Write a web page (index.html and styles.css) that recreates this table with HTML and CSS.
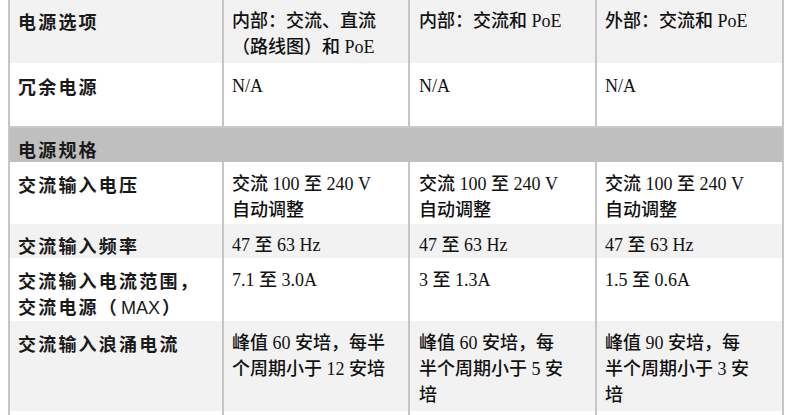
FILE: index.html
```html
<!DOCTYPE html>
<html lang="zh-CN">
<head>
<meta charset="utf-8">
<title>电源规格</title>
<link rel="stylesheet" href="styles.css">
</head>
<body>
<table class="spec">
  <colgroup>
    <col class="c1"><col class="c2"><col class="c3"><col class="c4">
  </colgroup>
  <tbody>
    <tr class="row head">
      <th class="label">电源选项</th>
      <td>内部：交流、直流<br>（路线图）和 PoE</td>
      <td>内部：交流和 PoE</td>
      <td class="last">外部：交流和 PoE</td>
    </tr>
    <tr class="row r-redundant">
      <th class="label">冗余电源</th>
      <td>N/A</td>
      <td>N/A</td>
      <td class="last">N/A</td>
    </tr>
    <tr class="section">
      <th class="label" colspan="4">电源规格</th>
    </tr>
    <tr class="row r-volt">
      <th class="label">交流输入电压</th>
      <td>交流 100 至 240 V<br>自动调整</td>
      <td>交流 100 至 240 V<br>自动调整</td>
      <td class="last">交流 100 至 240 V<br>自动调整</td>
    </tr>
    <tr class="row shade r-freq">
      <th class="label">交流输入频率</th>
      <td>47 至 63 Hz</td>
      <td>47 至 63 Hz</td>
      <td class="last">47 至 63 Hz</td>
    </tr>
    <tr class="row r-curr">
      <th class="label">交流输入电流范围，<br>交流电源（<span class="latin">MAX</span>）</th>
      <td>7.1 至 3.0A</td>
      <td>3 至 1.3A</td>
      <td class="last">1.5 至 0.6A</td>
    </tr>
    <tr class="row shade r-surge">
      <th class="label">交流输入浪涌电流</th>
      <td>峰值 60 安培，每半<br>个周期小于 12 安培</td>
      <td>峰值 60 安培，每<br>半个周期小于 5 安<br>培</td>
      <td class="last">峰值 90 安培，每<br>半个周期小于 3 安<br>培</td>
    </tr>
    <tr class="row r-tail">
      <th class="label"></th>
      <td></td>
      <td></td>
      <td class="last"></td>
    </tr>
  </tbody>
</table>
</body>
</html>
```

FILE: styles.css
```css
html, body {
  margin: 0;
  padding: 0;
  background: #ffffff;
}

body {
  padding-left: 8px;
  color: #111111;
  font-family: "Liberation Serif", "Noto Sans CJK TC", "Noto Sans CJK SC", serif;
  font-size: 18px;
}

.spec {
  border-collapse: separate;
  border-spacing: 0;
  table-layout: fixed;
  width: 776px;
}

.c1 { width: 214px; }
.c2 { width: 186px; }
.c3 { width: 187px; }
.c4 { width: 189px; }

.spec th,
.spec td {
  vertical-align: top;
  text-align: left;
  padding: 9px 4px 0 8px;
  line-height: 26px;
  border-left: 2px solid #c6c6c6;
  overflow: hidden;
}

.spec td.last {
  border-right: 2px solid #c6c6c6;
}

.spec td {
  font-weight: 500;
}

.spec td:nth-child(3) {
  padding-left: 9px;
}

.label {
  font-family: "Noto Sans CJK TC", "Noto Sans CJK SC", "Liberation Sans", sans-serif;
  font-weight: 700;
  letter-spacing: 2.2px;
  color: #1a1a1a;
}

.latin {
  font-family: "Liberation Sans", sans-serif;
  font-weight: 400;
  letter-spacing: 0;
  padding: 0 2px;
}

.head { height: 63px; background: #f2f2f2; }
.head th, .head td { padding-top: 8px; }

.r-redundant { height: 63px; }
.r-redundant th, .r-redundant td { padding-top: 10px; }

.section { height: 36px; background: #bfbfbf; }
.section th {
  border-top: 2px solid #c9c9c9;
  border-right: 2px solid #c6c6c6;
  padding-top: 8px;
  line-height: 26px;
}

.r-volt { height: 62px; }
.r-freq { height: 34px; }
.r-freq th, .r-freq td { padding-top: 8px; }
.r-curr { height: 63px; }
.r-surge { height: 90px; }
.r-tail { height: 20px; }

.shade { background: #f2f2f2; }
```
